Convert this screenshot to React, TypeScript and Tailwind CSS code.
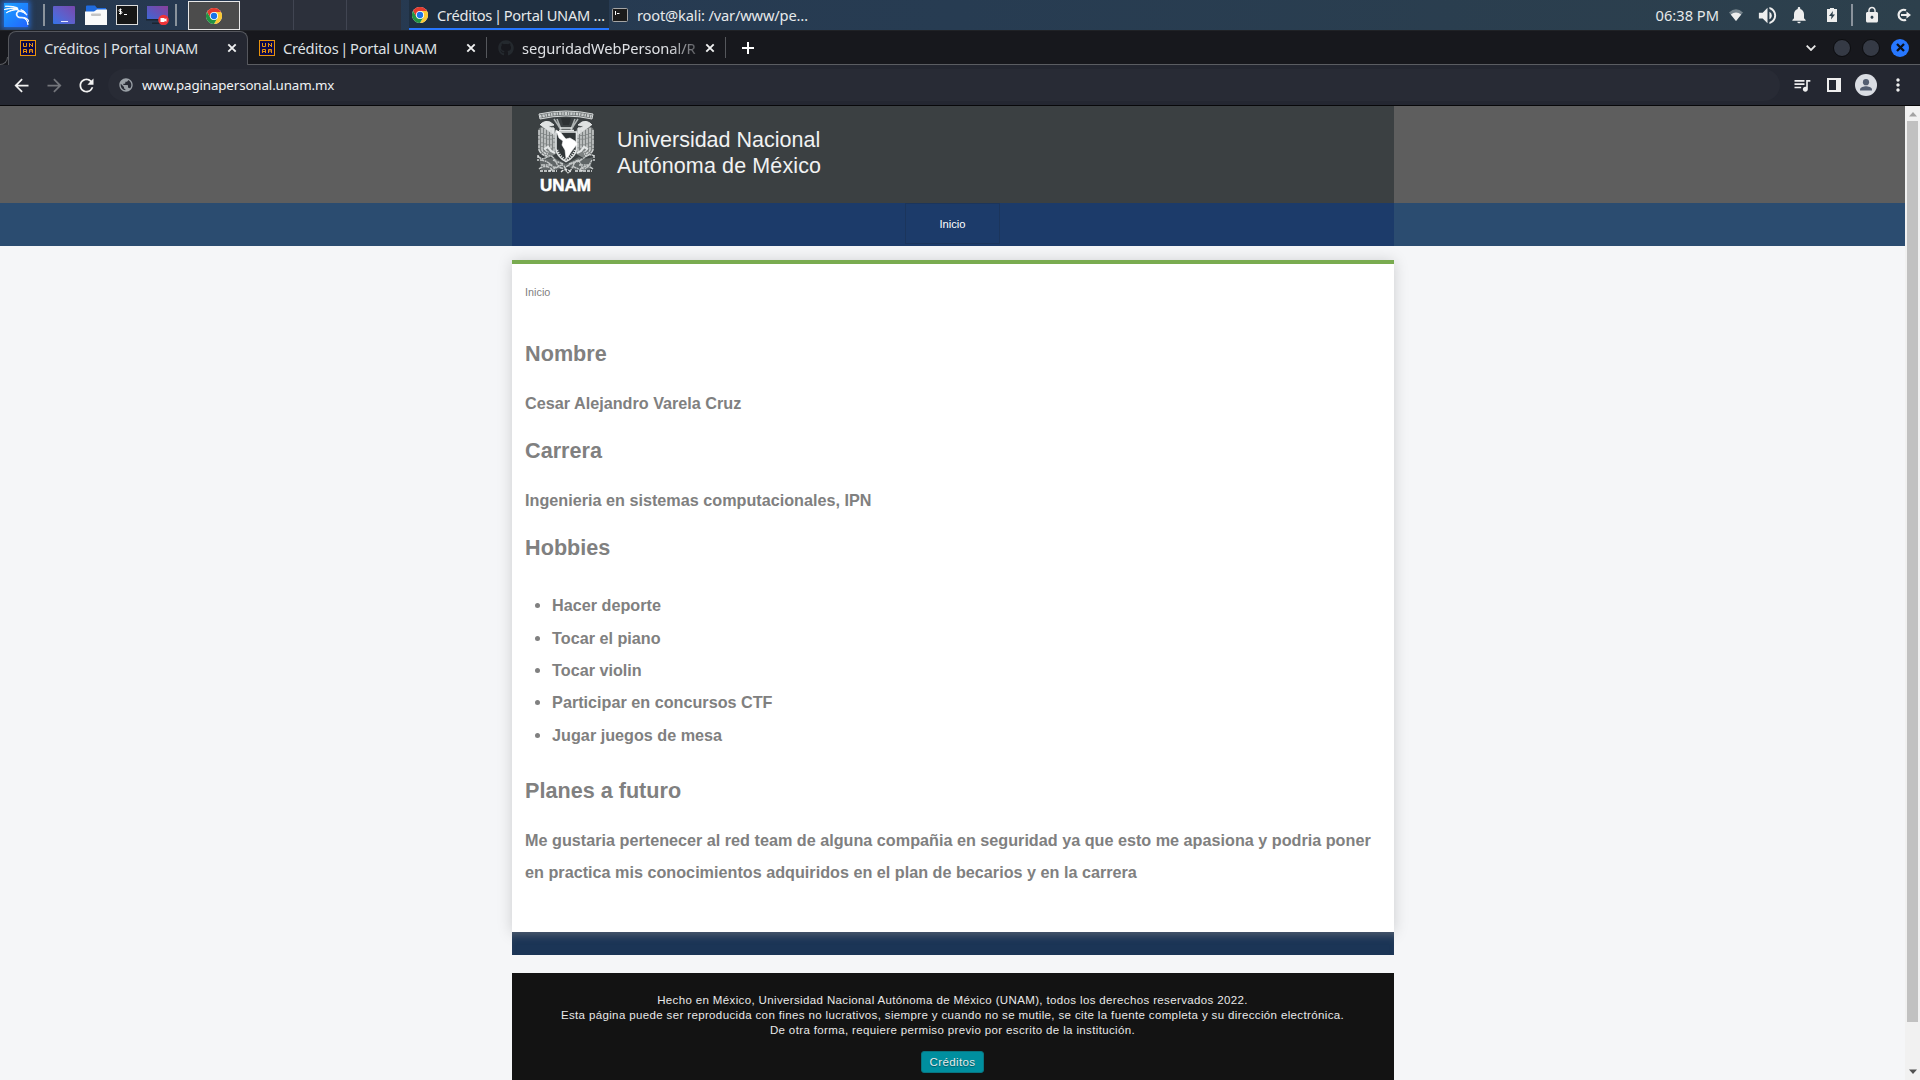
import React from "react";
import { SiKalilinux } from "react-icons/si";
import { FaGithub } from "react-icons/fa";
import { MdRefresh, MdPublic, MdQueueMusic, MdLock, MdNotifications, MdVolumeUp, MdArrowBack, MdArrowForward, MdMoreVert } from "react-icons/md";

const Chrome = ({ size = 16 }: { size?: number }) => (
  <svg width={size} height={size} viewBox="0 0 48 48" className="shrink-0">
    <circle cx="24" cy="24" r="24" fill="#fff" />
    <path d="M24 12H44.8A24 24 0 0 0 3.2 12L13.6 30Z" fill="#e33b2e" />
    <path d="M34.4 30 24 48A24 24 0 0 0 44.8 12H24Z" fill="#fcc934" />
    <path d="M13.6 30 3.2 12A24 24 0 0 0 24 48L34.4 30Z" fill="#229342" />
    <circle cx="24" cy="24" r="12" fill="#fff" />
    <circle cx="24" cy="24" r="9.5" fill="#1a73e8" />
  </svg>
);

const UnamIcon = () => (
  <svg width="16" height="16" viewBox="0 0 16 16" className="shrink-0">
    <rect width="16" height="16" fill="#e8930c" />
    <rect x="1" y="1" width="14" height="14" fill="#0b0a4a" />
    <path d="M3.500 3v3.500h3V3M9.500 7V3M9.500 4.500H11M11 5.500h1.500M12.500 3v4M3.500 13V9.500h3V13M3.500 11.500h3M9.500 13V9.500h3V13M11 9.500v2.500" fill="none" stroke="#e8930c" />
  </svg>
);

const Close = () => (
  <svg width="10" height="10" viewBox="0 0 10 10" className="shrink-0"><path d="M1.300 1.300l7.400 7.400M8.700 1.300L1.300 8.700" stroke="#f0f1f2" strokeWidth="1.900" /></svg>
);

const Separator = () => <div className="h-[22px] w-[2px] shrink-0 bg-[#8a939c]" />;

const PageTitle = ({ suffix = "" }: { suffix?: string }) => (
  <span className="whitespace-nowrap">Créditos <span className="-mx-[1.7px]">|</span> Portal UNAM{suffix}</span>
);

function Taskbar() {
  return (
    <div className="flex h-[30px] shrink-0 items-center bg-gradient-to-r from-[#263850] via-[#273c52] to-[#2d404c] text-[14.67px] tracking-[-0.17px] text-[#e6e9eb]">
      <div className="ml-1 flex h-6 w-6 items-center justify-center bg-gradient-to-br from-[#1fa0ff] to-[#2463ff] shadow-[0_0_5px_2px_#2766c8]">
        <SiKalilinux size={25} color="#fff" stroke="#fff" strokeWidth={0.9} className="shrink-0" />
      </div>
      <div className="ml-[15px]"><Separator /></div>
      <div className="ml-[8px] flex h-[18px] w-[22px] items-end justify-center rounded-[1px] bg-gradient-to-tr from-[#2f74e8] to-[#7647ad] pb-[2px]">
        <span className="h-px w-[7px] bg-[#e6e9ff]" />
      </div>
      <svg width="22" height="20" viewBox="0 0 22 20" className="ml-[10px]">
        <path d="M1 1.500a1 1 0 0 1 1-1h8l2 2.500h9V9H1z" fill="#1f6be0" />
        <path d="M0 6.500h9l3-2h10V20H0z" fill="#fafafa" />
        <rect x="6" y="8.500" width="10" height="2.500" rx="1" fill="#c4c4c4" />
      </svg>
      <svg width="22" height="20" viewBox="0 0 22 20" className="ml-[9px]">
        <rect x=".5" y=".5" width="21" height="19" fill="#161616" stroke="#dcdcdc" />
        <path d="M5.500 4.500H4a1 1 0 0 0 0 2h1a1 1 0 0 1 0 2H3M4.500 3.500v6M8 9.500h3" fill="none" stroke="#fff" />
      </svg>
      <svg width="24" height="20" viewBox="0 0 24 20" className="ml-[8px]">
        <defs><linearGradient id="rec" x1="0" y1="1" x2="1" y2="0"><stop stopColor="#3a68d8" /><stop offset="1" stopColor="#8a3f9a" /></linearGradient></defs>
        <path d="M1 1h21v14H1z" fill="url(#rec)" /><path d="M0 14h22v1.500H0zM6 17.500h9V19H6z" fill="#1b2430" />
        <circle cx="17.500" cy="15" r="5.300" fill="#ee3338" /><path d="M14.500 13h4v1.200l2-1v3.600l-2-1V17h-4z" fill="#fff" />
      </svg>
      <div className="ml-[5px]"><Separator /></div>
      <div className="ml-[11px] flex h-[29px] w-[52px] items-center justify-center self-end border border-[#e8e8e8] bg-[#4c4c4c]"><Chrome /></div>
      <div className="h-full w-[54px] border-r border-[#414552] bg-[#2c303b]" />
      <div className="h-full w-[53px] border-r border-[#414552] bg-[#2c303b]" />
      <div className="h-full w-[54px] bg-[#2c303b]" />
      <div className="ml-[8px] flex h-full w-[200px] items-center border-b-2 border-[#2777ff] bg-[#1f2f40] pl-[3px] pt-[2px]">
        <Chrome /><span className="ml-[9px] tracking-[-0.27px]"><PageTitle suffix=" …" /></span>
      </div>
      <svg width="16" height="14" viewBox="0 0 16 14" className="ml-[3px]">
        <rect x=".5" y=".5" width="15" height="13" rx="1" fill="#1b1b1b" stroke="#a5a5a5" /><path d="M3.500 3v4M5 5.500h2.500" stroke="#fff" />
      </svg>
      <span className="ml-[9px] whitespace-nowrap">root@kali: /var/www/pe…</span>
      <span className="ml-auto mr-[10px] whitespace-nowrap tracking-normal">06:38 PM</span>
      <svg width="14" height="12" viewBox="0 0 14 12"><path d="M0 3.500Q7-3 14 3.500L7 12z" fill="#75838c" /><path d="M1.800 5.500Q7 1.500 12.200 5.500L7 12z" fill="#eee" /></svg>
      <MdVolumeUp size={23} color="#eee" className="ml-[13px]" />
      <MdNotifications size={20} color="#eee" className="ml-[10px]" />
      <svg width="10" height="14" viewBox="0 0 10 14" className="ml-[18px]"><path d="M0 1h3V0h4v1h3v13H0z" fill="#eee" /><path d="M6 3L2 8h2.500L4 11.500 8 6.500H5.500z" fill="#2c3f4c" /></svg>
      <div className="ml-[14px]"><Separator /></div>
      <MdLock size={18} color="#eee" className="ml-[10px]" />
      <svg width="16" height="14" viewBox="0 0 16 14" className="ml-[15px] mr-[8px]"><path d="M10 2.300A5.200 5.200 0 1 0 10 11.700" fill="none" stroke="#eee" strokeWidth="2.200" /><path d="M5 6h5.500V3.500L15 7l-4.500 3.500V8H5z" fill="#eee" /></svg>
    </div>
  );
}

function TabStrip() {
  return (
    <div className="flex h-[35px] shrink-0 items-center border-t border-[#202226] bg-[#17181d] text-[14.67px] tracking-[-0.23px] text-[#dfe1e5]">
      <div className="flex h-full w-2 items-end"><div className="h-2 w-2 rounded-br-[8px] border-b border-r border-[#5b5d62] bg-[#17181d]" /></div>
      <div className="flex h-full w-[240px] items-center rounded-t-[8px] border-x border-t border-[#55575d] bg-[#242731] pb-[2px] pl-[11px]">
        <UnamIcon /><span className="ml-2"><PageTitle /></span>
        <span className="ml-auto mr-[10px]"><Close /></span>
      </div>
      <div className="flex h-full grow items-center border-b border-[#5b5d62]">
        <div className="ml-[11px] flex w-[227px] items-center">
          <UnamIcon /><span className="ml-2"><PageTitle /></span>
          <span className="ml-auto mr-[10px]"><Close /></span>
        </div>
        <div className="h-[21px] w-px bg-[#55575c]" />
        <FaGithub size={16} color="#24292e" className="ml-[11px]" />
        <div className="ml-2 w-[174px]">
          <span className="inline-block whitespace-nowrap tracking-[-0.05px] [mask-image:linear-gradient(to_right,black_84%,transparent_108%)]">seguridadWebPersonal/R</span>
        </div>
        <span className="ml-[9px]"><Close /></span>
        <div className="ml-[10px] h-[21px] w-px bg-[#55575c]" />
        <svg width="12" height="12" viewBox="0 0 12 12" className="ml-[16px]"><path d="M6 0v12M0 6h12" stroke="#fff" strokeWidth="2" /></svg>
        <svg width="10" height="6" viewBox="0 0 10 6" className="ml-auto mr-[17px]"><path d="M.7.700L5 5 9.300.700" fill="none" stroke="#e8e8e8" strokeWidth="1.800" /></svg>
        <div className="mr-[11px] h-[18px] w-[18px] rounded-full border border-[#0b0c0f] bg-[#353a45]" />
        <div className="mr-[11px] h-[18px] w-[18px] rounded-full border border-[#0b0c0f] bg-[#353a45]" />
        <div className="mr-[11px] flex h-[18px] w-[18px] items-center justify-center rounded-full bg-[#2777ff]">
          <svg width="9" height="9" viewBox="0 0 9 9"><path d="M1 1l7 7M8 1L1 8" stroke="#0c1017" strokeWidth="2.300" /></svg>
        </div>
      </div>
    </div>
  );
}

function Toolbar() {
  return (
    <div className="flex h-[41px] shrink-0 items-center border-b border-[#08080a] bg-[#242731]">
      <MdArrowBack size={21} color="#f1f1f1" className="ml-[11px]" />
      <MdArrowForward size={21} color="#73757b" className="ml-[12px]" />
      <MdRefresh size={21} color="#f1f1f1" className="ml-[11px]" />
      <div className="ml-[11px] flex h-8 w-[1672px] items-center rounded-full bg-[#282b35] pl-[10px] text-[13.33px] tracking-[-0.12px] text-[#f1f3f4]">
        <MdPublic size={16} color="#9aa0a6" /><span className="ml-2 pt-px">www.paginapersonal.unam.mx</span>
      </div>
      <MdQueueMusic size={20} color="#eee" className="ml-[12px]" />
      <div className="ml-[15px] h-[14px] w-[14px] border-2 border-r-[5px] border-[#eee]" />
      <svg width="22" height="22" viewBox="0 0 22 22" className="ml-[14px]"><circle cx="11" cy="11" r="11" fill="#dadde3" /><circle cx="11" cy="8.200" r="3.100" fill="#535e72" /><path d="M5 16.500v-1c0-2 4-3.200 6-3.200s6 1.200 6 3.200v1z" fill="#535e72" /></svg>
      <MdMoreVert size={20} color="#eee" className="ml-[11px]" />
    </div>
  );
}

const Crest = () => (
  <svg width="58" height="64" viewBox="0 0 58 64" fill="none" stroke="#e3e6e6">
    <path d="M2 4Q29-2 56 4L55 9Q29 3 3 9Z" fill="#6d7273" strokeWidth=".9" />
    <path d="M3 6.500Q29 .500 55 6.500" strokeWidth="2.800" strokeDasharray="1.500 1 2.300 .8" stroke="#c9cdcd" />
    <path d="M1.500 19q4-5 15-2l4 6v20l-9 5q-8-2-10-9zM56.500 19q-4-5-15-2l-4 6v20l9 5q8-2 10-9z" fill="#7d8282" stroke="none" />
    <path d="M3 15q4-5 10-3l4 3-6 1q3 3 6 2v7M55 15q-4-5-10-3l-4 3 6 1q-3 3-6 2v7" fill="#dfe2e2" />
    <path d="M17 9l4 6 3 5M41 9l-4 6-3 5M20 9l4 10M38 9l-4 10M28 10v3M30 10v3" strokeWidth="1.500" stroke="#aeb3b3" />
    <path d="M24 8h10l-2 7h-6z" fill="#2d3133" stroke="none" />
    <path d="M23 18h12M22 20.500h15" strokeWidth="1.500" />
    <path d="M2 20v20q2 5 8 6M5 18v22q2 4 6 4M8 19v20q1 3 4 3M11 20v18M14 20v19M17 23v18M56 20v20q-2 5-8 6M53 18v22q-2 4-6 4M50 19v20q-1 3-4 3M47 20v18M44 20v19M41 23v18" strokeWidth="1.400" strokeDasharray="5 .8 3 .7" stroke="#d2d5d5" />
    <path d="M19 22H39.500v17q-1 8-10.500 12.500-9-4.500-10-12.500z" fill="#303537" strokeWidth="1.600" />
    <path d="M20 40q2 6 9 10 7-4 9-10" strokeWidth="2.500" strokeDasharray="1.200 1.200" />
    <path d="M19 20l5 3 4 5 1 1 4-1 5 3 2 3-3 4-3 4-3 5-2 1-1-8-3-5 1-4-4-3z" fill="#fff" stroke="#fff" strokeWidth=".6" />
    <path d="M7 39l4-2 3 4 4 2M51 39l-4-2-3 4-4 2" strokeWidth="2.200" />
    <path d="M2 47q8 3 14 0l13 7 13-7q6 3 14 0l-3 13H38l-9-4-9 4H4z" fill="#5f6566" stroke="none" />
    <path d="M1 46q4 5 9 1t9 5 10 5 10-5 9-5 9-1M3 50q8 1 11 5t8 1 7 4 7-4 8-1 11-5M2 59q6-5 13 0M56 59q-6-5-13 0M16 50l10 4M42 50l-10 4M4 55h12M42 55h12M12 61l11-5M46 61l-11-5" strokeWidth="1.400" stroke="#c3c7c7" strokeDasharray="4 .7 2 .5" />
    <path d="M1 45v6M57 45v6M3 61h17M38 61h17M24 62q5-5 10 0" strokeWidth="1.300" strokeDasharray="3 1" />
  </svg>
);

const hobbies = ["Hacer deporte", "Tocar el piano", "Tocar violin", "Participar en concursos CTF", "Jugar juegos de mesa"];

const Section = ({ title, children }: { title: string; children: React.ReactNode }) => (
  <section>
    <h2 className="mb-[11.4px] text-[21.6px] leading-[43.2px]">{title}</h2>
    {children}
  </section>
);

function Page() {
  return (
    <div className="h-full w-[1905px] bg-[#f5f6f8] font-['Liberation_Sans',Arial,sans-serif]">
      <header className="h-[97px] bg-[#5e5e5e]">
        <div className="mx-auto flex h-full w-[882px] bg-[#3b4042] text-white">
          <div className="ml-[25px] mt-[4px] flex w-[58px] flex-col items-center">
            <Crest />
            <span className="mt-[4px] text-[17px] font-bold leading-[15px] [-webkit-text-stroke:0.5px_white]">UNAM</span>
          </div>
          <div className="ml-[22.5px] mt-[22px] whitespace-nowrap text-[21.5px] leading-[25.5px] text-[#f1f2f2]">
            <div>Universidad Nacional</div><div className="tracking-[0.12px]">Autónoma de México</div>
          </div>
        </div>
      </header>
      <nav className="h-[43px] bg-[#2b4c70]">
        <div className="mx-auto flex h-full w-[882px] justify-center bg-[#1c3b6a]">
          <a className="flex h-[41px] w-[95px] items-center justify-center border border-[#1b355c] pt-[2px] text-[11.2px] text-white">Inicio</a>
        </div>
      </nav>
      <main className="mx-auto mt-[14px] h-[672px] w-[882px] border-t-4 border-[#79ab50] bg-white pl-[13.6px] pr-[12px] text-[#808080] shadow-[0_1px_14px_rgba(0,0,0,0.17)]">
        <div className="pt-[20px] text-[10.8px] leading-[16px]">Inicio</div>
        <div className="mt-[32px] flex flex-col gap-[10.2px] text-[16.2px] font-bold leading-[32.4px]">
          <Section title="Nombre"><p>Cesar Alejandro Varela Cruz</p></Section>
          <Section title="Carrera"><p>Ingenieria en sistemas computacionales, IPN</p></Section>
          <Section title="Hobbies">
            <ul className="mb-[7.9px] mt-[19.7px] list-disc pl-[27px]">{hobbies.map((h) => <li key={h}>{h}</li>)}</ul>
          </Section>
          <Section title="Planes a futuro">
            <p>Me gustaria pertenecer al red team de alguna compañia en seguridad ya que esto me apasiona y podria poner en practica mis conocimientos adquiridos en el plan de becarios y en la carrera</p>
          </Section>
        </div>
      </main>
      <div className="relative mx-auto h-[23px] w-[882px] bg-[#1b3556] shadow-[inset_0_8px_8px_-5px_rgba(110,115,125,0.65)]" />
      <footer className="mx-auto mt-[18px] h-[107px] w-[882px] bg-[#131313] pt-[20px] text-center text-[11.5px] leading-[15px] tracking-[0.365px] text-[#e9e9e9]">
        <p>Hecho en México, Universidad Nacional Autónoma de México (UNAM), todos los derechos reservados 2022.</p>
        <p>Esta página puede ser reproducida con fines no lucrativos, siempre y cuando no se mutile, se cite la fuente completa y su dirección electrónica.</p>
        <p>De otra forma, requiere permiso previo por escrito de la institución.</p>
        <button className="mt-[13px] h-[22px] w-[63px] rounded-[3px] border border-[#087581] bg-[#008f9f] tracking-[0.37px] [text-shadow:0_1px_1px_rgba(0,0,0,0.4)]">Créditos</button>
      </footer>
    </div>
  );
}

export default function App() {
  return (
    <div className="flex h-[1080px] w-[1920px] flex-col overflow-hidden font-['Noto_Sans',sans-serif]">
      <Taskbar />
      <TabStrip />
      <Toolbar />
      <div className="flex h-[974px]">
        <Page />
        <div className="flex w-[15px] flex-col items-center bg-[#f1f1f1] py-[5px]">
          <svg width="8" height="5" viewBox="0 0 8 5" className="mt-px"><path d="M4 0l4 4.500H0z" fill="#a3a3a3" /></svg>
          <div className="mt-[4px] h-[901px] w-[11px] bg-[#c1c1c1]" />
          <svg width="8" height="5" viewBox="0 0 8 5" className="mb-px mt-auto"><path d="M0 .500h8L4 5z" fill="#505050" /></svg>
        </div>
      </div>
    </div>
  );
}
